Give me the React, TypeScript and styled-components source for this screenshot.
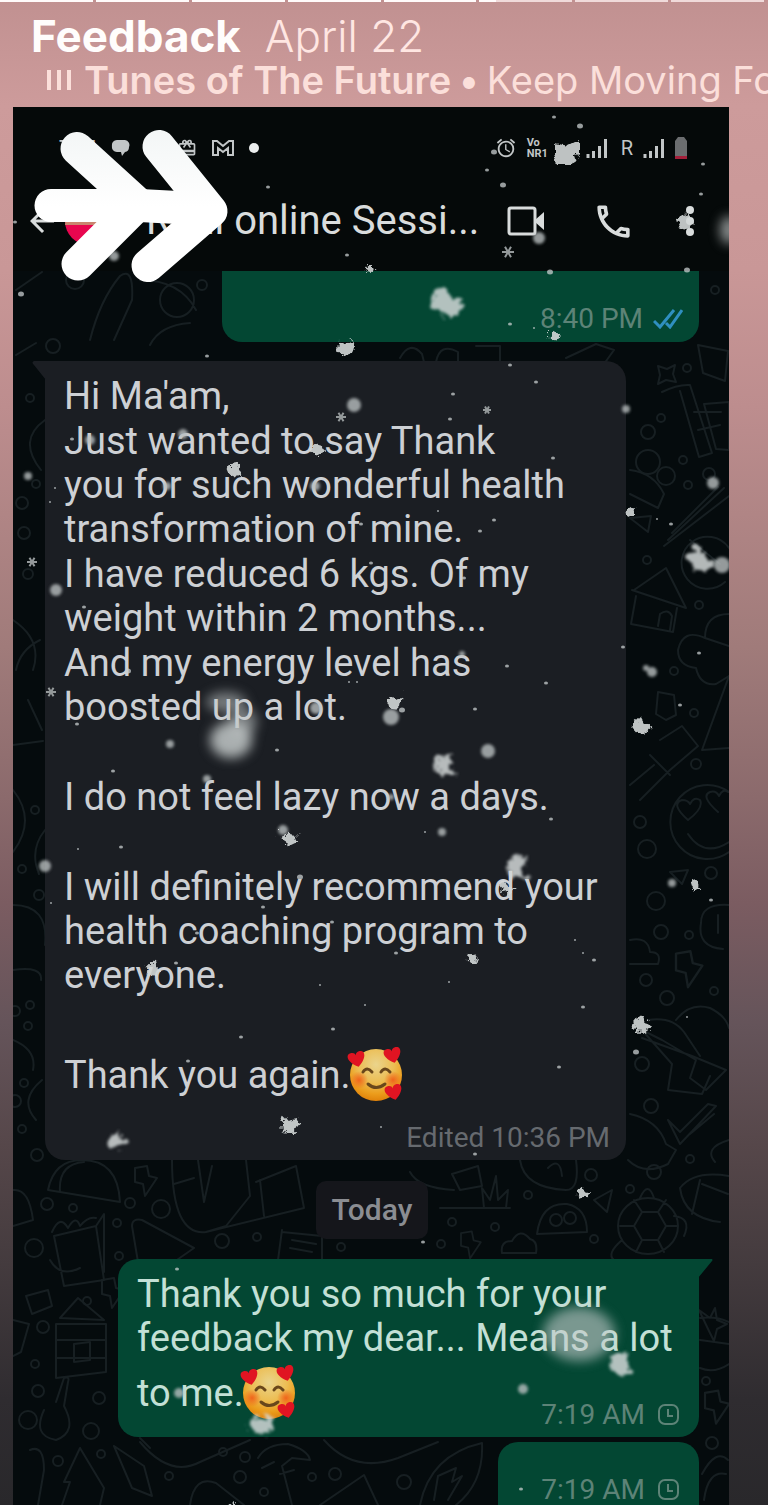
import React from "react";
import styled, { createGlobalStyle } from "styled-components";
import { MdOutlineCall, MdAlarm, MdArrowBack, MdCardGiftcard } from "react-icons/md";

const GlobalStyle = createGlobalStyle`
  * { box-sizing: border-box; }
  body { margin: 0; background: #2a282b; font-family: Roboto, "Noto Sans", sans-serif; }
  p, h1, h2 { margin: 0; font-weight: 400; }
  svg { flex: none; }
`;

const Story = styled.div`
  height: 100vh;
  overflow: hidden;
  display: flex;
  flex-direction: column;
  background: linear-gradient(
    180deg,
    #c19191 0%, #cd9b9b 7%, #c99797 18%, #bd8d8e 27%, #a07b7a 43%,
    #8b6a6c 53%, #7b5c61 60%, #65545a 68%, #56474a 76%, #443b3e 84%, #2f2c30 93%, #29282b 100%
  );
`;

const Progress = styled.div`
  display: flex;
  gap: 3px;
  height: 2px;
  padding-right: 4px;
`;

const Segment = styled.span<{ $fill: number }>`
  flex: 1;
  background: linear-gradient(90deg, #fffafa ${(p) => p.$fill}%, #f0dada ${(p) => p.$fill}%);
`;

const StoryHeader = styled.header`
  height: 105px;
  padding: 8px 0 0 31px;
  overflow: hidden;
  white-space: nowrap;
  font-family: Inter, "Liberation Sans", sans-serif;
  font-optical-sizing: none;
`;

const TitleRow = styled.div`
  display: flex;
  gap: 24px;
  font-size: 44px;
  line-height: 52px;
  color: #ffe6e2;
`;

const StoryTitle = styled.h1`
  font-size: 44px;
  font-weight: 700;
  color: #fffdfc;
`;

const StoryDate = styled.span`
  font-weight: 300;
`;

const MusicRow = styled.div`
  display: flex;
  align-items: center;
  padding-left: 16px;
  font-size: 38px;
  line-height: 36px;
  color: #fbdfda;
`;

const MusicIcon = styled.svg`
  width: 24px;
  height: 20px;
  margin-right: 13px;
`;

const Song = styled.span`
  font-weight: 600;
`;

const Separator = styled.span`
  margin: 0 7px;
`;

const Artist = styled.span`
  font-weight: 400;
`;

const Phone = styled.main`
  position: relative;
  flex: 1;
  display: flex;
  flex-direction: column;
  min-height: 0;
  margin: 0 39px 0 13px;
  overflow: hidden;
  background: #050909;
`;

const StatusBar = styled.div`
  display: flex;
  align-items: center;
  justify-content: space-between;
  height: 64px;
  padding: 18px 42px 0 46px;
  color: #c2c6c7;
`;

const StatusGroup = styled.div<{ $gap: number }>`
  display: flex;
  align-items: center;
  gap: ${(p) => p.$gap}px;
  font-size: 22px;
`;

const GiftIcon = styled(MdCardGiftcard)`
  margin-left: 32px;
`;

const Network = styled.span`
  padding-left: 3px;
  font-size: 20px;
`;

const VoNr = styled.span`
  display: flex;
  flex-direction: column;
  width: 49px;
  font-size: 11px;
  font-weight: 700;
  line-height: 11px;
`;

const AppBar = styled.div`
  display: flex;
  align-items: center;
  height: 100px;
  padding: 0 24px 0 12px;
  color: #d9dcdc;
`;

const IconButton = styled.button<{ $w: number }>`
  display: flex;
  align-items: center;
  justify-content: center;
  width: ${(p) => p.$w}px;
  height: 48px;
  padding: 0;
  border: 0;
  background: none;
  color: inherit;
`;

const Avatar = styled.svg`
  width: 52px;
  height: 52px;
  margin: 0 31px 0 4px;
`;

const ChatName = styled.h2`
  flex: 1;
  font-size: 40px;
  line-height: 48px;
  white-space: nowrap;
`;

const Actions = styled.div`
  display: flex;
  gap: 28px;
`;

const Chat = styled.section`
  position: relative;
  flex: 1;
  display: flex;
  flex-direction: column;
  min-height: 0;
  padding: 0 30px 0 32px;
  overflow: hidden;
  background: #050b0d;
`;

const Doodles = styled.svg`
  position: absolute;
  inset: 0;
  width: 100%;
  height: 100%;
`;

const Overlay = styled(Doodles)`
  pointer-events: none;
`;

const Bubble = styled.article<{ $out?: boolean; $w: number }>`
  position: relative;
  flex: none;
  display: flex;
  flex-direction: column;
  align-self: ${(p) => (p.$out ? "flex-end" : "flex-start")};
  width: ${(p) => p.$w}px;
  max-width: 100%;
  padding: 13px 16px 2px 19px;
  border-radius: 20px;
  background: ${(p) => (p.$out ? "#034733" : "#1b1e23")};
  color: ${(p) => (p.$out ? "#c3e0d6" : "#cdd0d4")};
`;

const FirstBubble = styled(Bubble)`
  height: 71px;
  padding-top: 28px;
  border-radius: 0 0 20px 20px;
`;

const ReceivedBubble = styled(Bubble)`
  margin-top: 19px;
  border-top-left-radius: 0;
`;

const ReplyBubble = styled(Bubble)`
  margin-top: 20px;
  border-top-right-radius: 0;
`;

const LastBubble = styled(Bubble)`
  margin-top: 5px;
  padding-top: 28px;
  padding-bottom: 20px;
`;

const Tail = styled.svg<{ $side: "left" | "right" }>`
  position: absolute;
  top: 0;
  ${(p) => p.$side}: -14px;
  width: 15px;
  height: 20px;
`;

const Text = styled.div`
  display: flex;
  flex-direction: column;
  gap: 1px;
  font-size: 38px;
  line-height: 44px;
  white-space: pre-line;
`;

const EmojiLine = styled.p`
  display: flex;
  align-items: center;
  height: 64px;
`;

const EmojiFace = styled.svg`
  width: 56px;
  height: 56px;
  margin-left: -4px;
`;

const Blank = styled.p`
  height: 44px;
`;

const Meta = styled.div<{ $out?: boolean }>`
  display: flex;
  align-items: center;
  justify-content: flex-end;
  gap: 10px;
  font-size: 28px;
  line-height: 40px;
  color: ${(p) => (p.$out ? "#5d8377" : "#666a6f")};
`;

const ReplyMeta = styled(Meta)`
  margin-top: -30px;
`;

const ReceivedMeta = styled(Meta)`
  margin-top: 11px;
`;

const DayChip = styled.div`
  position: relative;
  flex: none;
  align-self: center;
  margin-top: 21px;
  padding: 0 16px;
  border-radius: 10px;
  background: #15161b;
  color: #8b8d92;
  font-size: 30px;
  font-weight: 500;
  line-height: 58px;
`;

const heart = "M0 6C-9 0-9-7-4-7C-1-7 0-5 0-4C0-5 1-7 4-7C9-7 9 0 0 6Z";

function Emoji() {
  return (
    <EmojiFace viewBox="0 0 56 56" role="img" aria-label="Smiling face with hearts">
      <defs>
        <radialGradient id="face" cx="50%" cy="30%" r="70%">
          <stop offset="0" stopColor="#ead48c" />
          <stop offset=".5" stopColor="#ecbd52" />
          <stop offset=".8" stopColor="#ec9d1c" />
          <stop offset="1" stopColor="#e0820a" />
        </radialGradient>
        <radialGradient id="cheek">
          <stop offset="0" stopColor="#f0651c" />
          <stop offset="1" stopColor="#f0651c" stopOpacity="0" />
        </radialGradient>
      </defs>
      <circle cx="29" cy="28" r="26" fill="url(#face)" />
      <circle cx="12" cy="33" r="9" fill="url(#cheek)" />
      <circle cx="46" cy="33" r="9" fill="url(#cheek)" />
      <path d="M16 25q4-6 9 0M34 25q4-6 9 0" fill="none" stroke="#69471b" strokeWidth="3" strokeLinecap="round" />
      <path d="M21 37q8 7 17 0" fill="none" stroke="#69471b" strokeWidth="3" strokeLinecap="round" />
      <g fill="#e01422">
        <path d={heart} transform="translate(10 13) rotate(-14) scale(1.150)" />
        <path d={heart} transform="translate(46 9) rotate(-14) scale(1.150)" />
        <path d={heart} transform="translate(47 46) rotate(-14) scale(1.150)" />
      </g>
    </EmojiFace>
  );
}

function Clock() {
  return (
    <svg width="28" height="22" viewBox="0 0 28 22" fill="none" stroke="currentColor" strokeWidth="2" role="img" aria-label="Pending">
      <rect x="4" y="1" width="19" height="19" rx="6" />
      <path d="M13 5v7h5" />
    </svg>
  );
}

function Signal() {
  return (
    <svg width="22" height="20" viewBox="0 0 22 20" stroke="currentColor" strokeWidth="3">
      <path d="M2 20v-4M7.500 20v-7M13.500 20v-12M19.500 20v-19" />
    </svg>
  );
}

/* x, y, radius */
const dots: number[][] = [
  [268,187,2],[347,255,2],[15,222,2],[554,117,2],[580,126,3],[494,152,3],[487,170,2],[503,185,3],[703,164,2],[701,194,2],
  [550,272,3],[687,270,3],[510,324,2],[534,328,1],[207,356,2],[72,439,2],[50,502,1],[55,488,1],[361,524,2],[371,563,2],
  [84,607,2],[128,671,3],[349,682,1],[357,682,1],[77,724,2],[277,750,2],[510,365,2],[536,382,2],[453,394,2],[450,419,2],
  [553,458,2],[671,524,2],[657,519,1],[438,511,1],[494,520,2],[480,531,2],[464,578,2],[623,647,2],[699,653,2],[507,666,2],
  [546,683,2],[402,710,3],[475,709,2],[680,705,2],[113,771,2],[78,849,1],[121,847,2],[51,903,1],[300,877,3],[263,907,2],
  [332,922,2],[197,933,2],[176,963,2],[320,985,1],[365,1005,1],[333,1029,2],[241,1037,2],[188,1061,2],[381,1127,1],
  [551,819,2],[425,832,1],[711,900,2],[575,940,1],[583,953,1],[594,960,2],[449,982,1],[583,1007,2],[636,1052,3],
  [559,1067,2],[475,1154,2],[396,953,2],[177,1269,2],[423,1242,2],[521,1489,2],[21,294,3],[210,390,2],[687,1017,1],
];
const soft: number[][] = [
  [114,256,5],[539,238,6],[354,405,7],[90,440,5],[183,434,5],[28,476,4],[167,486,4],[315,486,5],[56,590,6],[316,708,6],
  [170,744,4],[626,409,4],[713,483,6],[722,565,8],[462,654,3],[646,668,3],[652,672,5],[391,717,8],[488,751,7],[207,779,4],
  [283,830,5],[45,866,6],[442,832,4],[672,883,4],[179,1393,5],[523,1389,5],[391,797,3],
];
/* x, y, width, out of focus */
const clumps: number[][] = [
  [566,151,30,0],[445,301,34,1],[686,221,18,0],[554,335,10,0],[370,267,10,0],[345,347,19,0],[317,450,13,0],[235,470,14,0],
  [630,511,10,0],[698,558,28,1],[394,702,16,0],[640,725,20,0],[444,764,24,1],[290,837,16,0],[153,968,16,0],[290,1124,21,0],
  [117,1138,22,1],[516,866,28,1],[507,888,14,0],[694,885,11,0],[472,959,10,0],[641,1024,20,0],[260,1423,26,1],[582,1192,13,0],
  [619,1362,27,1],[234,1504,8,0],
];
const stars: number[][] = [[508,252,6],[341,417,5],[487,410,4],[32,562,5],[51,692,5]];

function Snow() {
  return (
    <Overlay viewBox="13 107 716 1398" preserveAspectRatio="xMinYMin slice" aria-hidden="true">
      <defs>
        <filter id="soft"><feGaussianBlur stdDeviation="1.500" /></filter>
        <filter id="haze" x="-50%" y="-50%" width="200%" height="200%"><feGaussianBlur stdDeviation="6" /></filter>
        <filter id="ragged" x="-40%" y="-40%" width="180%" height="180%">
          <feTurbulence type="turbulence" baseFrequency=".11" numOctaves="1" seed="4" />
          <feDisplacementMap in="SourceGraphic" scale="10" xChannelSelector="R" yChannelSelector="G" />
          <feOffset dx="-3" dy="-3" />
          <feGaussianBlur stdDeviation=".7" />
        </filter>
        <filter id="raggedSoft" x="-40%" y="-40%" width="180%" height="180%">
          <feTurbulence type="turbulence" baseFrequency=".09" numOctaves="1" seed="9" />
          <feDisplacementMap in="SourceGraphic" scale="16" xChannelSelector="R" yChannelSelector="G" />
          <feOffset dx="-4" dy="-4" />
          <feGaussianBlur stdDeviation="1.600" />
        </filter>
      </defs>
      <g fill="#c3c9c9" filter="url(#haze)">
        <ellipse cx="226" cy="702" rx="20" ry="10" opacity=".55" />
        <ellipse cx="243" cy="722" rx="14" ry="14" opacity=".55" />
        <ellipse cx="231" cy="740" rx="21" ry="18" opacity=".85" />
        <ellipse cx="729" cy="230" rx="9" ry="14" opacity=".7" />
        <ellipse cx="579" cy="1334" rx="36" ry="27" opacity=".62" />
      </g>
      <g fill="#c9cecf" opacity=".75">
        {dots.map(([x, y, r]) => <ellipse key={`${x}-${y}`} cx={x} cy={y} rx={r} ry={r > 1 ? r - 0.5 : r} />)}
      </g>
      <g fill="#b9bfc0" opacity=".8" filter="url(#soft)">
        {soft.map(([x, y, r]) => <circle key={`${x}-${y}`} cx={x} cy={y} r={r} />)}
      </g>
      <g fill="#d3d8d8">
        {clumps.map(([x, y, w, far], i) => (
          <g key={`${x}-${y}`} filter={far ? "url(#raggedSoft)" : "url(#ragged)"} opacity={far ? 0.85 : 0.9}>
            <path
              d="M-4-3L0-2L4-4L4 1L2 4L-3 4L-4 1Z"
              transform={`translate(${x} ${y}) rotate(${(i * 37) % 90}) scale(${w / 10})`}
            />
          </g>
        ))}
      </g>
      <g stroke="#94999a">
        {stars.map(([x, y, r]) => (
          <path
            key={`${x}-${y}`}
            d="M-1 0H1M-.5-.87L.5.87M.5-.87L-.5.87"
            transform={`translate(${x} ${y}) scale(${r})`}
            strokeWidth={2 / r}
          />
        ))}
      </g>
      <linearGradient id="chalk" x1="0" y1="130" x2="0" y2="283" gradientUnits="userSpaceOnUse">
        <stop offset="0" stopColor="#f3f6f6" />
        <stop offset=".5" stopColor="#ffffff" />
      </linearGradient>
      <g fill="none" stroke="url(#chalk)" strokeWidth="33" strokeLinecap="round" strokeLinejoin="round">
        <path d="M77 148.500L138 204L78 264" />
        <path d="M159 146.500L211 211L148 265.500" />
        <path d="M51 205.500H140L205 209" />
      </g>
    </Overlay>
  );
}

const rings: number[][] = [
  [715,290,4],[687,368,4],[661,418,4],[648,432,7],[648,462,12],[666,476,9],[683,460,4],[688,485,4],[709,474,6],[647,560,4],
  [699,605,4],[674,671,4],[694,713,4],[696,764,5],[640,822,6],[647,849,9],[711,873,6],[656,901,9],[661,932,7],[689,935,4],
  [646,980,6],[667,998,7],[714,991,4],[642,1064,7],[651,1106,7],[690,1159,4],[654,1172,7],[591,1175,6],[528,1195,4],[630,1189,4],
  [495,1227,4],[452,1222,4],[594,1239,4],[441,1244,4],[30,398,4],[36,484,4],[24,533,6],[22,503,6],[28,574,5],[35,810,4],
  [22,869,4],[39,895,5],[30,1005,4],[15,1011,5],[28,1026,4],[15,1101,6],[24,1083,4],[22,1129,4],[37,1155,6],
  [47,1204,6],[73,1208,4],[130,1203,5],[161,1209,9],[34,1248,9],[117,1223,4],[119,1256,4],[222,1241,7],[257,1237,4],[341,1247,4],
  [87,1301,4],[43,1327,6],[35,1364,4],[38,1391,6],[99,1398,6],[28,1420,9],[91,1431,8],[58,1461,5],[101,1454,4],
  [169,1476,4],[223,1452,4],[245,1457,5],[240,1477,6],[264,1492,4],[312,1477,4],[335,1474,6],[404,1482,7],[706,1381,4],[712,1443,6],
  [53,346,7],[202,285,5],[75,280,9],
];
const bolts: number[][] = [[688,968,1.2],[145,1180,1],[470,1244,0.9],[716,1406,1.1],[112,1292,1]];
const doodles = [
  "M658 366l9 3 8-4-2 9 3 8-10-2-8 4 2-9zM698 345l30 6-3 30-22-8zM662 392q16-8 28-7l22 68-13 4-19-66M704 404l25-2v48l-13-1zM694 412l27 0M698 430l22-5",
  "M630 470q24 3 34 24l-6 14-28-14M664 546l65-50M668 540l56-52M672 533l46-46M630 518l21-2-3 16z",
  "M634 590l32-22 20 40-54-18M636 596l-5 28 42 8 4-24M658 626l2-12q8-6 12 2l-2 14",
  "M729 548a26 26 0 1 0-4 34M690 540l30 24M729 614q-24 0-24 24-22-10-27 12 0 16 18 18 4 18 20 16l13-8M705 638l24 8",
  "M658 692l16 3 2 20-10 5-10-6zM702 750l27-74M702 750l27-2M660 740l22-14 16 20-28 24-30 30M650 755l20 20M630 785l24-20",
  "M729 792a37 37 0 1 0 0 60M688 820q-18-16-6-20 6 0 8 4 4-8 10-4 4 8-12 20M718 812q-18-16-8-20 6-2 9 4 4-8 9-4M688 834q16 24 41 8",
  "M670 872l18-2-6 14zM729 905q-28-2-28 18-4 24 22 26M718 915v18M630 940q18-4 20 12 12 0 8 12H630",
  "M676 1020q14-18 34-12 16 8 19 20M648 1020q24-4 36 12l16 24M642 1038l50 18 34 14-20 20-16-12 6-18-34-20-20-10 30 34-4 26 34 4 8-18",
  "M668 1120l12 12 28-28 8 2-36 38zM690 1134l24-20M630 1114q28 6 36 30l10 6-8 14q-24 12-40-4M729 1140q-26 8-14 22",
  "M680 1188q14-18 49-12M680 1188q4 30 40 34M700 1180l-8 34M702 1184l26 10",
  "M618 1226a30 28 0 1 0 60 0a30 28 0 1 0-60 0M634 1226l8-14h16l8 14-8 14h-16zM642 1212l-8-12M658 1212l8-12M666 1226h12M658 1240l6 12M642 1240l-6 12M634 1226h-14M640 1198q8-18 14 0M674 1216q18 2 10 20M622 1240q-16 14-8 20",
  "M537 1234q4-32 30-30 20 4 20 28zM594 1200l18-10-5 22zM550 1220a6 6 0 1 0 12 0a6 6 0 1 0-12 0M564 1218a6 6 0 1 0 12 0a6 6 0 1 0-12 0M502 1253q-2-12 10-12 8-14 18-2 8 2 6 14z",
  "M520 1160q4 28 46 30 14 0 10-30M548 1168q12-12 14 8M452 1174l26-8 4 20-22 4zM440 1208h70M484 1208l-2-20 8 12 6-24 2 24 10-10-2 18M410 1172q8 16 44 18",
  "M48 1190q6-30 34-30 36 0 38 42zM84 1162q-26 2-24 30M54 1236l42-10 8 54-40 6zM96 1226l8-12v58M50 1260q10 18 30 8M52 1232q8-18 16-4 8-14 12-2 8-10 16-8",
  "M172 1160q0 76 34 72l98-24-8-42-40 16M198 1160l6 42 8-36M206 1232l20-6 24-30-4-36M174 1184l20-6M260 1180l4 36M132 1226q0-8 10-6l52 28-20 14M132 1226l6 36M282 1232l40 4v28M292 1240l24 4M290 1248l22 4M278 1260l4-30",
  "M26 1296l22-6 4 16-20 8zM60 1318l18-20 26 22zM56 1324h50v48l-50 6zM56 1340h50M56 1358h50M74 1344l16-2v18l-16 2zM13 1320l16 4-8 28-8 4",
  "M56 1402l8-24q6-2 4 4l-4 24q14 26-8 34-24-4-12-30M30 1450q14-6 14 20l-6 35M80 1448l-16 34 6 0-8 23M80 1448l24 40-4 17M114 1446l30 20 8 30-20-8zM140 1442q30 36 60 20l50-22M150 1448l-10-10",
  "M258 1458q8-14 30-14 20 6 22 16l-18-2-10 8 10 39M262 1468l12-6M280 1474l14-4M190 1505q4-30 26-22l28 22M320 1505l44-30 14 30M324 1440q30 34 74 18l40-16M420 1505q10-50 62-62 2 40-26 62M434 1500l4-24 18-8-4 14 10-6-14 24M702 1474q14-26 26-14M704 1500q4-30 22-26",
  "M699 1310l11 8 5-10 2 12 10 4-10 5-3 12-5-10zM700 1318q16-2 29 4M700 1340l29 4M700 1368q14 6 29-4",
  "M16 290l26-18M90 340q10-40 30-64 14-10 12 24l-18 40M140 280q40 0 56 30M150 345q10-20 40-22M160 300a16 16 0 1 0 34 0a16 16 0 1 0-34 0M16 355l20-12M400 358q10-18 22-4l2 8M436 362q4-20 22-10v12M476 346h24v16h-24M566 358l30-14 18 6-10 14",
  "M45 420q-28 20-4 50M13 620q30 20 20 50M40 640q-20 10-24 30M13 745l30-4M28 700l14 30M13 790q24 30 0 62M45 830q-16 20-6 44M13 905q36 0 32 40M13 970q30-4 28 10M13 1040q24 10 20 30M42 1080q-24 20-6 40M13 1190q16-2 20 30l-20 6",
];

function Wallpaper() {
  return (
    <Doodles viewBox="13 271 716 1234" preserveAspectRatio="xMinYMin slice" aria-hidden="true">
      <g fill="none" stroke="#171f22" strokeWidth="2" strokeLinejoin="round" strokeLinecap="round">
        {rings.map(([x, y, r]) => <circle key={`${x}-${y}`} cx={x} cy={y} r={r} />)}
        {bolts.map(([x, y, s]) => (
          <path key={`${x}-${y}`} d="M-10-12L2-14L4-4L12-2L0 16L-2 4L-10 2Z" transform={`translate(${x} ${y}) scale(${s})`} />
        ))}
        {doodles.map((d) => <path key={d} d={d} />)}
      </g>
    </Doodles>
  );
}

export default function App() {
  return (
    <>
      <GlobalStyle />
      <Story>
        <Progress>
          {[100, 100, 100, 100, 100, 18, 0, 0].map((fill, i) => <Segment key={i} $fill={fill} />)}
        </Progress>
        <StoryHeader>
          <TitleRow>
            <StoryTitle>Feedback</StoryTitle>
            <StoryDate>April 22</StoryDate>
          </TitleRow>
          <MusicRow>
            <MusicIcon viewBox="0 0 24 20" stroke="currentColor" strokeWidth="4" aria-hidden="true">
              <path d="M2 0v20M12 0v20M22 0v20" />
            </MusicIcon>
            <Song>Tunes of The Future</Song>
            <Separator>•</Separator>
            <Artist>Keep Moving Forward</Artist>
          </MusicRow>
        </StoryHeader>
        <Phone>
          <StatusBar>
            <StatusGroup $gap={15}>
              <span>T M</span>
              <svg width="19" height="18" viewBox="0 0 19 18" fill="currentColor">
                <path d="M6 1h8a5 5 0 0 1 4 7a5 5 0 0 1-4 5l-3 4-1-4h-4a5 5 0 0 1-5-6a5 5 0 0 1 5-6z" />
              </svg>
              <GiftIcon size={20} />
              <svg width="22" height="16" viewBox="0 0 22 16" fill="none" stroke="currentColor" strokeWidth="2">
                <path d="M1 1h4l6 5 6-5h4v14h-5v-7l-5 4-5-4v7h-5z" />
              </svg>
              <svg width="10" height="10" viewBox="0 0 10 10"><circle cx="5" cy="5" r="5" fill="#eceeee" /></svg>
            </StatusGroup>
            <StatusGroup $gap={10}>
              <MdAlarm size={22} />
              <VoNr><span>Vo</span><span>NR1</span></VoNr>
              <Signal />
              <Network>R</Network>
              <Signal />
              <svg width="12" height="22" viewBox="0 0 12 22">
                <path d="M3 0h6l3 4v18h-12v-18z" fill="#6b6d6f" />
                <path d="M0 19h12v3h-12z" fill="#a31f3a" />
              </svg>
            </StatusGroup>
          </StatusBar>
          <AppBar>
            <IconButton $w={34} aria-label="Back"><MdArrowBack size={36} /></IconButton>
            <Avatar viewBox="0 0 52 52" aria-hidden="true">
              <circle cx="26" cy="26" r="24" fill="#e8064f" />
              <path d="M3 20a24 24 0 0 1 46 0l1 10h-48z" fill="#c9866f" />
            </Avatar>
            <ChatName>Rani online Sessi...</ChatName>
            <Actions>
              <IconButton $w={50} aria-label="Video call">
                <svg width="38" height="30" viewBox="0 0 38 30" fill="none" stroke="currentColor" strokeWidth="3">
                  <rect x="2" y="2" width="26" height="26" rx="2" />
                  <path d="M28 14l9-8v18l-9-8z" fill="currentColor" stroke="none" />
                </svg>
              </IconButton>
              <IconButton $w={68} aria-label="Voice call"><MdOutlineCall size={43} /></IconButton>
              <IconButton $w={30} aria-label="More options">
                <svg width="8" height="32" viewBox="0 0 8 32" fill="currentColor">
                  <circle cx="4" cy="5" r="4" /><circle cx="4" cy="16" r="4" /><circle cx="4" cy="27" r="4" />
                </svg>
              </IconButton>
            </Actions>
          </AppBar>
          <Chat>
            <Wallpaper />
            <FirstBubble $out $w={477}>
              <Meta $out>
                8:40 PM
                <svg width="30" height="20" viewBox="0 0 30 20" fill="none" stroke="#2f8fc0" strokeWidth="3" role="img" aria-label="Read">
                  <path d="M1 12l6 6L21 1M13 14l4 4L29 1" />
                </svg>
              </Meta>
            </FirstBubble>
            <ReceivedBubble $w={581}>
              <Tail $side="left" viewBox="0 0 15 20"><path d="M15 0H3Q0 1 3 4L15 19Z" fill="#1b1e23" /></Tail>
              <Text>
                <p>Hi Ma'am,</p>
                <p>{"Just wanted to say Thank\nyou for such wonderful health\ntransformation of mine."}</p>
                <p>{"I have reduced 6 kgs. Of my\nweight within 2 months..."}</p>
                <p>{"And my energy level has\nboosted up a lot."}</p>
                <Blank />
                <p>I do not feel lazy now a days.</p>
                <Blank />
                <p>{"I will definitely recommend your\nhealth coaching program to\neveryone."}</p>
                <Blank />
                <EmojiLine>Thank you again.<Emoji /></EmojiLine>
              </Text>
              <ReceivedMeta>Edited 10:36 PM</ReceivedMeta>
            </ReceivedBubble>
            <DayChip>Today</DayChip>
            <ReplyBubble $out $w={581}>
              <Tail $side="right" viewBox="0 0 15 20"><path d="M0 0H14Q15 1 14 2L0 19Z" fill="#034733" /></Tail>
              <Text>
                <p>{"Thank you so much for your\nfeedback my dear... Means a lot"}</p>
                <EmojiLine>to me.<Emoji /></EmojiLine>
              </Text>
              <ReplyMeta $out>7:19 AM<Clock /></ReplyMeta>
            </ReplyBubble>
            <LastBubble $out $w={201}>
              <Meta $out>7:19 AM<Clock /></Meta>
            </LastBubble>
          </Chat>
          <Snow />
        </Phone>
      </Story>
    </>
  );
}
